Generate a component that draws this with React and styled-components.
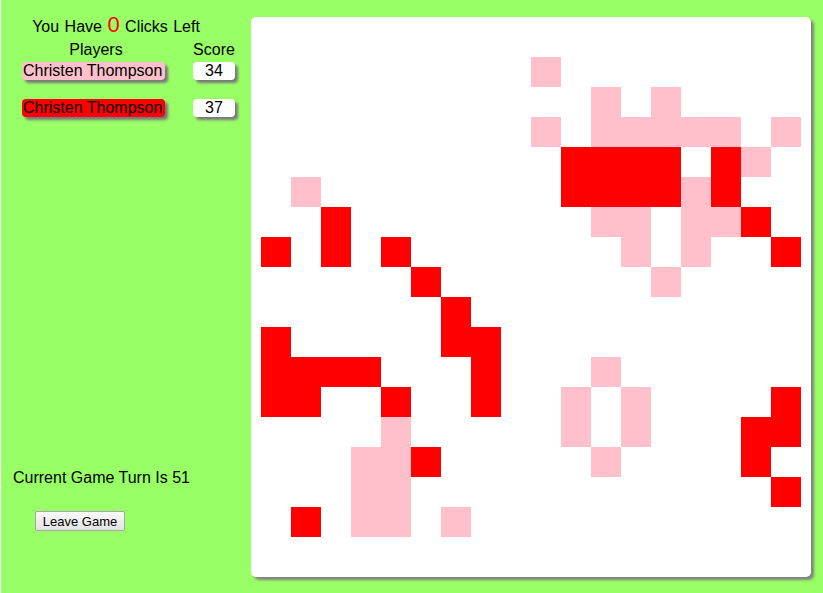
import React from "react"
import styled, { createGlobalStyle } from "styled-components"

const GlobalStyle = createGlobalStyle`
  html, body {
    margin: 0;
    padding: 0;
    background: #ffffff;
  }
  body {
    font-family: "Liberation Sans", Arial, sans-serif;
  }
`

const RED = "#ff0000"
const PINK = "#ffc0cb"

// r = red, p = pink, . = empty ; 18 x 18
const BOARD = [
  "..................",
  ".........p........",
  "...........p.p....",
  ".........p.ppppp.p",
  "..........rrrr.rp.",
  ".p........rrrrpr..",
  "..r........pp.ppr.",
  "r.r.r.......p.p..r",
  ".....r.......p....",
  "......r...........",
  "r.....rr..........",
  "rrrr...r...p......",
  "rr..r..r..p.p....r",
  "....p.....p.p...rr",
  "...ppr.....p....r.",
  "...pp............r",
  ".r.pp.p...........",
  "..................",
]

const players = [
  { name: "Christen Thompson", score: 34, color: PINK },
  { name: "Christen Thompson", score: 37, color: RED },
]

const Page = styled.div`
  margin-left: 1px;
  height: 593px;
  background: #99ff66;
  display: flex;
  align-items: flex-start;
`

const Sidebar = styled.div`
  width: 250px;
  height: 577px;
  display: flex;
  flex-direction: column;
  color: #000;
  font-size: 16px;
`

const Heading = styled.div`
  width: 230px;
  margin-top: 12px;
  text-align: center;
  line-height: 25px;
  word-spacing: 1px;
`

const ClicksLeft = styled.span`
  color: ${RED};
  font-size: 22px;
`

const ScoreTable = styled.div`
  display: grid;
  grid-template-columns: 148px 42px;
  column-gap: 23px;
  row-gap: 19px;
  margin-top: 2px;
  padding-left: 21px;
  align-items: center;
`

const ColumnHead = styled.div`
  text-align: center;
  line-height: 18px;
  margin-bottom: -16px;
`

const NameTag = styled.div`
  justify-self: start;
  background: ${(p) => p.$color};
  line-height: 18px;
  padding: 0 3px 0 1px;
  border-radius: 4px;
  box-shadow: 3px 3px 3px #777;
  white-space: nowrap;
`

const ScoreBox = styled.div`
  background: #fff;
  line-height: 18px;
  text-align: center;
  border-radius: 4px;
  box-shadow: 3px 3px 3px #777;
`

const Spacer = styled.div`
  flex: 1;
`

const TurnInfo = styled.div`
  padding-left: 12px;
  line-height: 18px;
`

const LeaveButton = styled.button`
  align-self: flex-start;
  margin: 24px 0 46px 34px;
  width: 90px;
  height: 20px;
  padding: 0;
  font-family: "Liberation Sans", Arial, sans-serif;
  font-size: 13px;
  color: #000;
  background: linear-gradient(#fafafa, #e3e3e3);
  border: 1px solid #a6a6a6;
  border-radius: 2px;
`

const Board = styled.div`
  margin-top: 17px;
  width: 560px;
  height: 560px;
  box-sizing: border-box;
  padding: 10px;
  background: #fff;
  border-radius: 5px;
  box-shadow: 3px 3px 3px #808080;
  display: grid;
  grid-template-columns: repeat(18, 30px);
  grid-template-rows: repeat(18, 30px);
`

const Cell = styled.div`
  background: ${(p) => (p.$kind === "r" ? RED : p.$kind === "p" ? PINK : "transparent")};
`

export default function App() {
  return (
    <>
      <GlobalStyle />
      <Page>
        <Sidebar>
          <Heading>
            You Have <ClicksLeft>0</ClicksLeft> Clicks Left
          </Heading>
          <ScoreTable>
            <ColumnHead>Players</ColumnHead>
            <ColumnHead>Score</ColumnHead>
            {players.map((pl, i) => (
              <React.Fragment key={i}>
                <NameTag $color={pl.color}>{pl.name}</NameTag>
                <ScoreBox>{pl.score}</ScoreBox>
              </React.Fragment>
            ))}
          </ScoreTable>
          <Spacer />
          <TurnInfo>Current Game Turn Is 51</TurnInfo>
          <LeaveButton>Leave Game</LeaveButton>
        </Sidebar>
        <Board>
          {BOARD.flatMap((row, r) =>
            row.split("").map((c, col) => <Cell key={`${r}-${col}`} $kind={c} />)
          )}
        </Board>
      </Page>
    </>
  )
}
